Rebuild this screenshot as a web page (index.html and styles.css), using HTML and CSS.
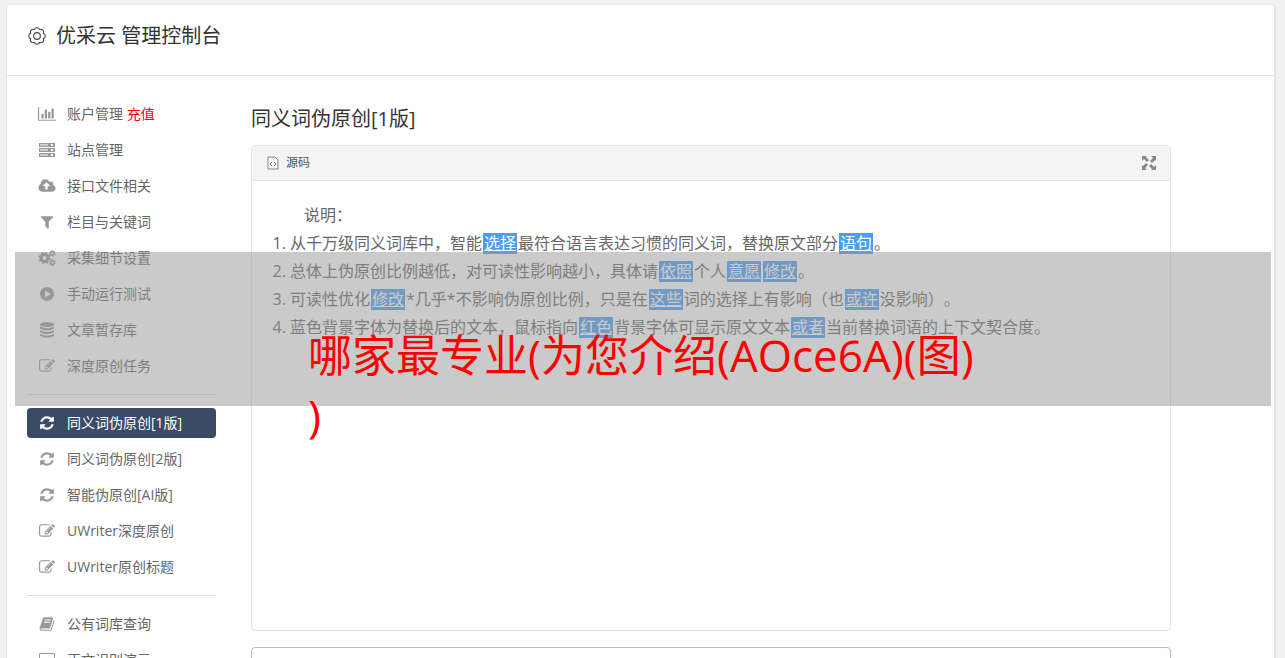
FILE: index.html
```html
<!DOCTYPE html>
<html lang="zh-CN">
  <head>
    <meta charset="UTF-8">
    <title>优采云 管理控制台</title>
    <link rel="stylesheet" href="styles.css">
  </head>
  <body>
    <!-- icons used more than once -->
    <svg class="sprite" aria-hidden="true">
      <symbol id="refresh" viewBox="0 0 1792 1792"><path d="M1639 1056q0 5-1 7-64 268-268 434.500t-478 166.500q-146 0-282.500-55t-243.500-157l-129 129q-19 19-45 19t-45-19-19-45v-448q0-26 19-45t45-19h448q26 0 45 19t19 45-19 45l-137 137q71 66 161 102t187 36q134 0 250-65t186-179q11-17 53-117 8-23 30-23h192q13 0 22.500 9.500t9.500 22.500zm25-800v448q0 26-19 45t-45 19h-448q-26 0-45-19t-19-45 19-45l138-138q-148-137-349-137-134 0-250 65t-186 179q-11 17-53 117-8 23-30 23h-199q-13 0-22.500-9.500t-9.500-22.500v-7q65-268 270-434.500t480-166.500q146 0 284 55.500t245 156.500l130-129q19-19 45-19t45 19 19 45z"/></symbol>
      <symbol id="edit" viewBox="0 0 1792 1792"><path d="M888 1184l116-116-152-152-116 116v56h96v96h56zm440-720q-16-16-33 1l-350 350q-17 17-1 33t33-1l350-350q17-17 1-33zm80 594v190q0 119-84.500 203.500t-203.500 84.500h-832q-119 0-203.500-84.500t-84.500-203.500v-832q0-119 84.500-203.500t203.500-84.500h832q63 0 117 25 15 7 18 23 3 17-9 29l-49 49q-14 14-32 8-23-6-45-6h-832q-66 0-113 47t-47 113v832q0 66 47 113t113 47h832q66 0 113-47t47-113v-126q0-13 9-22l64-64q15-15 35-7t20 29zm-96-738l288 288-672 672h-288v-288zm444 132l-92 92-288-288 92-92q28-28 68-28t68 28l152 152q28 28 28 68t-28 68z"/></symbol>
    </svg>

    <div class="container">
      <header class="header">
        <svg class="gear" viewBox="0 0 18 18"><path d="M6.600 3.200A2.600 2.600 0 0 1 11.400 3.200A2.600 2.600 0 0 1 14.800 6.600A2.600 2.600 0 0 1 14.800 11.400A2.600 2.600 0 0 1 11.400 14.800A2.600 2.600 0 0 1 6.600 14.800A2.600 2.600 0 0 1 3.200 11.400A2.600 2.600 0 0 1 3.200 6.600A2.600 2.600 0 0 1 6.600 3.200z"/><circle cx="9" cy="9" r="3"/></svg>
        <h1>优采云 管理控制台</h1>
      </header>

      <div class="main">
        <nav class="sidebar">
          <ul>
            <li><a href="#"><svg class="icon" viewBox="0 0 2048 1792"><path d="M640 896v512h-256v-512h256zm384-512v1024h-256v-1024h256zm1024 1152v128h-2048v-1536h128v1408h1920zm-640-896v768h-256v-768h256zm384-384v1152h-256v-1152h256z"/></svg>账户管理 <span class="red">充值</span></a></li>
            <li><a href="#"><svg class="icon" viewBox="0 0 18 16"><path fill-rule="evenodd" d="M1 1h16v4H1zM13 2h2v2h-2zM1 6h16v4H1zM13 7h2v2h-2zM1 11h16v4H1zM13 12h2v2h-2z"/><path class="slot" d="M2 2h8v2H2zM2 7h8v2H2zM2 12h8v2H2z"/></svg>站点管理</a></li>
            <li><a href="#"><svg class="icon" viewBox="0 0 1920 1792"><path d="M1280 864q0-14-9-23l-352-352q-9-9-23-9t-23 9l-351 351q-10 12-10 24 0 14 9 23t23 9h224v352q0 13 9.500 22.500t22.500 9.500h192q13 0 22.500-9.500t9.500-22.500v-352h224q13 0 22.500-9.500t9.500-22.500zm640 288q0 159-112.500 271.500t-271.500 112.500h-1088q-185 0-316.500-131.500t-131.500-316.500q0-130 70-240t188-165q-2-30-2-43 0-212 150-362t362-150q156 0 285.500 87t188.500 231q71-62 166-62 106 0 181 75t75 181q0 76-41 138 130 31 213.500 135.500t83.500 238.500z"/></svg>接口文件相关</a></li>
            <li><a href="#"><svg class="icon" viewBox="0 0 1792 1792"><path d="M1595 295q17 41-14 70l-493 493v742q0 42-39 59-13 5-25 5-27 0-45-19l-256-256q-19-19-19-45v-486l-493-493q-31-29-14-70 17-39 59-39h1280q42 0 59 39z"/></svg>栏目与关键词</a></li>
            <li><a href="#"><svg class="icon cogs" viewBox="0 0 18 16"><circle cx="6.500" cy="8" r="3.500" stroke-width="3"/><circle cx="6.500" cy="8" r="5.300" stroke-width="1.600" stroke-dasharray="2.100 2.060"/><circle cx="14.300" cy="3.400" r="1.800" stroke-width="1.500"/><circle cx="14.300" cy="3.400" r="2.900" stroke-width="1" stroke-dasharray="1.500 1.540"/><circle cx="14.300" cy="12.600" r="1.800" stroke-width="1.500"/><circle cx="14.300" cy="12.600" r="2.900" stroke-width="1" stroke-dasharray="1.500 1.540"/></svg>采集细节设置</a></li>
            <li><a href="#"><svg class="icon" viewBox="0 0 18 16"><path fill-rule="evenodd" d="M9 1a7 7 0 1 1 0 14a7 7 0 1 1 0-14zM7 4.500v7l6-3.500z"/></svg>手动运行测试</a></li>
            <li><a href="#"><svg class="icon" viewBox="0 0 18 16"><ellipse cx="9" cy="2.500" rx="7" ry="2.500"/><path d="M2 4.500q7 3.500 14 0v2q-7 4-14 0zM2 8.300q7 3.500 14 0v2q-7 4-14 0zM2 12.100q7 3.500 14 0v1.700q-7 4-14 0z"/></svg>文章暂存库</a></li>
            <li><a href="#"><svg class="icon"><use href="#edit"/></svg>深度原创任务</a></li>
          </ul>
          <hr>
          <ul>
            <li><a class="active" href="#"><svg class="icon"><use href="#refresh"/></svg>同义词伪原创[1版]</a></li>
            <li><a href="#"><svg class="icon"><use href="#refresh"/></svg>同义词伪原创[2版]</a></li>
            <li><a href="#"><svg class="icon"><use href="#refresh"/></svg>智能伪原创[AI版]</a></li>
            <li><a href="#"><svg class="icon"><use href="#edit"/></svg>UWriter深度原创</a></li>
            <li><a href="#"><svg class="icon"><use href="#edit"/></svg>UWriter原创标题</a></li>
          </ul>
          <hr>
          <ul>
            <li><a href="#"><svg class="icon" viewBox="0 0 1792 1792"><path d="M1703 478q40 57 18 129l-275 906q-19 64-76.500 107.500t-122.500 43.500h-923q-77 0-148.500-53.500t-99.500-131.500q-24-67-2-127 0-4 3-27t4-37q1-8-3-21.500t-3-19.500q2-11 8-21t16.500-23.500 16.500-23.500q23-38 45-91.500t30-91.500q3-10 .5-30t-.5-28q3-11 17-28t17-23q21-36 42-92t25-90q1-9-2.500-32t.5-28q4-13 22-30.500t22-22.500q19-26 42.500-84.500t27.500-96.500q1-8-3-25.500t-2-26.500q2-8 9-18t18-23 17-21q8-12 16.500-30.500t15-35 16-36 19.500-32 26.500-23.500 36-11.500 47.500 5.500l-1 3q38-9 51-9h761q74 0 114 56t18 130l-274 906q-36 119-71.500 153.500t-128.500 34.500h-869q-27 0-38 15-11 16-1 43 24 70 144 70h923q29 0 56-15.500t35-41.500l300-987q7-22 5-57 38 15 59 43zm-1064 2q-4 13 2 22.500t20 9.500h608q13 0 25.500-9.500t16.500-22.500l21-64q4-13-2-22.500t-20-9.500h-608q-13 0-25.500 9.500t-16.500 22.500zm-83 256q-4 13 2 22.500t20 9.500h608q13 0 25.500-9.500t16.500-22.500l21-64q4-13-2-22.500t-20-9.500h-608q-13 0-25.500 9.500t-16.500 22.500z"/></svg>公有词库查询</a></li>
            <li><a href="#"><svg class="icon" viewBox="0 0 18 16"><path fill-rule="evenodd" d="M2 1h14q1 0 1 1v10q0 1-1 1h-5v2H7v-2H2q-1 0-1-1V2q0-1 1-1zM2 2v8h14V2z"/></svg>正文识别演示</a></li>
          </ul>
        </nav>

        <section class="content">
          <h2>同义词伪原创[1版]</h2>
          <div class="editor">
            <div class="toolbar">
              <button type="button"><svg class="source" viewBox="0 0 12 14"><path d="M1 1h7l3 3v9H1zM5 6L3 8l2 2M7 6l2 2-2 2"/></svg>源码</button>
              <button type="button" aria-label="全屏"><svg class="full" viewBox="0 0 14 14"><path d="M0 0h5L4 1l3 3-2 2-3-3-2 2zM14 0v5l-1-1-3 3-2-2 3-3-2-2zM0 14V9l1 1 3-3 2 2-3 3 2 2zM14 14H9l1-1-3-3 2-2 3 3 2-2z"/></svg></button>
            </div>
            <div class="text">
              <p>说明：</p>
              <ol>
                <li>从千万级同义词库中，智能<u>选择</u>最符合语言表达习惯的同义词，替换原文部分<u>语句</u>。</li>
                <li>总体上伪原创比例越低，对可读性影响越小，具体请<u>依照</u>个人<u>意愿</u><u>修改</u>。</li>
                <li>可读性优化<u>修改</u>*几乎*不影响伪原创比例，只是在<u>这些</u>词的选择上有影响（也<u>或许</u>没影响）。</li>
                <li>蓝色背景字体为替换后的文本，鼠标指向<u>红色</u>背景字体可显示原文文本<u>或者</u>当前替换词语的上下文契合度。</li>
              </ol>
            </div>
          </div>
          <textarea class="result" aria-label="结果"></textarea>
        </section>
      </div>
    </div>

    <div class="banner">哪家最专业(为您介绍(AOce6A)(图)<br>)</div>
  </body>
</html>
```
FILE: styles.css
```css
* {
    box-sizing: border-box;
}

body {
    margin: 0;
    padding: 4px 9px 0 6px;
    height: 100vh;
    overflow: hidden;
    background: #f1f1f1;
    color: #666;
    font: 14px/30px "Open Sans", "Noto Sans CJK SC", sans-serif;
    text-spacing-trim: space-all;
}

h1, h2, p, ul, ol {
    margin: 0;
    padding: 0;
    font-weight: normal;
}

.sprite {
    display: none;
}

.container {
    background: #fff;
    border: 1px solid #e4e4e4;
    border-right-width: 2px;
    border-radius: 4px;
}

.header {
    display: flex;
    align-items: center;
    gap: 10px;
    height: 71px;
    padding: 0 20px 8px;
    border-bottom: 1px solid #e4e4e4;
}

.header h1, .content h2 {
    font-size: 20px;
    line-height: 30px;
    color: #333;
}

.gear {
    width: 20px;
    height: 20px;
    margin-right: -1px;
    fill: none;
    stroke: #444;
}

.main {
    display: flex;
    gap: 35px;
    padding: 23px 103px 0 20px;
}

.sidebar {
    flex: 0 0 189px;
}

.sidebar ul {
    list-style: none;
}

.sidebar li + li {
    margin-top: 6px;
}

.sidebar a {
    display: flex;
    align-items: center;
    height: 30px;
    padding-left: 11px;
    border-radius: 4px;
    color: #666;
    text-decoration: none;
    white-space: pre;
}

.sidebar a.active {
    background: #394b66;
    color: #fff;
}

.sidebar hr {
    margin: 13px 0;
    border: 0;
    border-top: 1px solid #ddd;
}

.icon {
    width: 18px;
    height: 16px;
    margin-right: 11px;
    fill: #999;
}

.slot {
    fill: #ccc;
}

.cogs {
    fill: none;
    stroke: #999;
}

.active .icon {
    fill: #fff;
}

.red {
    color: #f00;
}

.content {
    flex: 1;
    padding-top: 5px;
}

.content h2 {
    margin-bottom: 11px;
}

.editor {
    min-height: 486px;
    border: 1px solid #e4e4e4;
    border-radius: 4px;
}

.toolbar {
    display: flex;
    justify-content: space-between;
    height: 35px;
    padding: 0 14px 0 15px;
    background: #f4f4f4;
    border-bottom: 1px solid #e4e4e4;
}

.toolbar button {
    display: flex;
    align-items: center;
    gap: 7px;
    padding: 0;
    border: 0;
    background: none;
    color: #555;
    font: 12px/34px "Open Sans", "Noto Sans CJK SC", sans-serif;
}

.source {
    width: 12px;
    height: 14px;
    fill: none;
    stroke: #888;
}

.full {
    width: 14px;
    height: 14px;
    fill: #888;
}

.text {
    padding: 20px;
    font-size: 16px;
    line-height: 28px;
}

.text p {
    text-indent: 32px;
}

.text ol {
    padding-left: 18px;
}

.text u {
    display: inline-block;
    margin: 0 1px;
    padding: 0 1px;
    background: #4a9df5;
    color: #fff;
    line-height: 21px;
    text-decoration: underline;
}

.result {
    display: block;
    width: 100%;
    height: 200px;
    margin-top: 16px;
    border: 1px solid #bbb;
    border-radius: 4px;
    resize: none;
}

/* strip laid over the page */
.banner {
    position: absolute;
    top: 252px;
    left: 15px;
    right: 14px;
    height: 154px;
    padding: 73px 0 0 293px;
    background: rgba(150, 150, 150, .5);
    color: #f00;
    font-size: 44px;
    line-height: 60px;
}
```
